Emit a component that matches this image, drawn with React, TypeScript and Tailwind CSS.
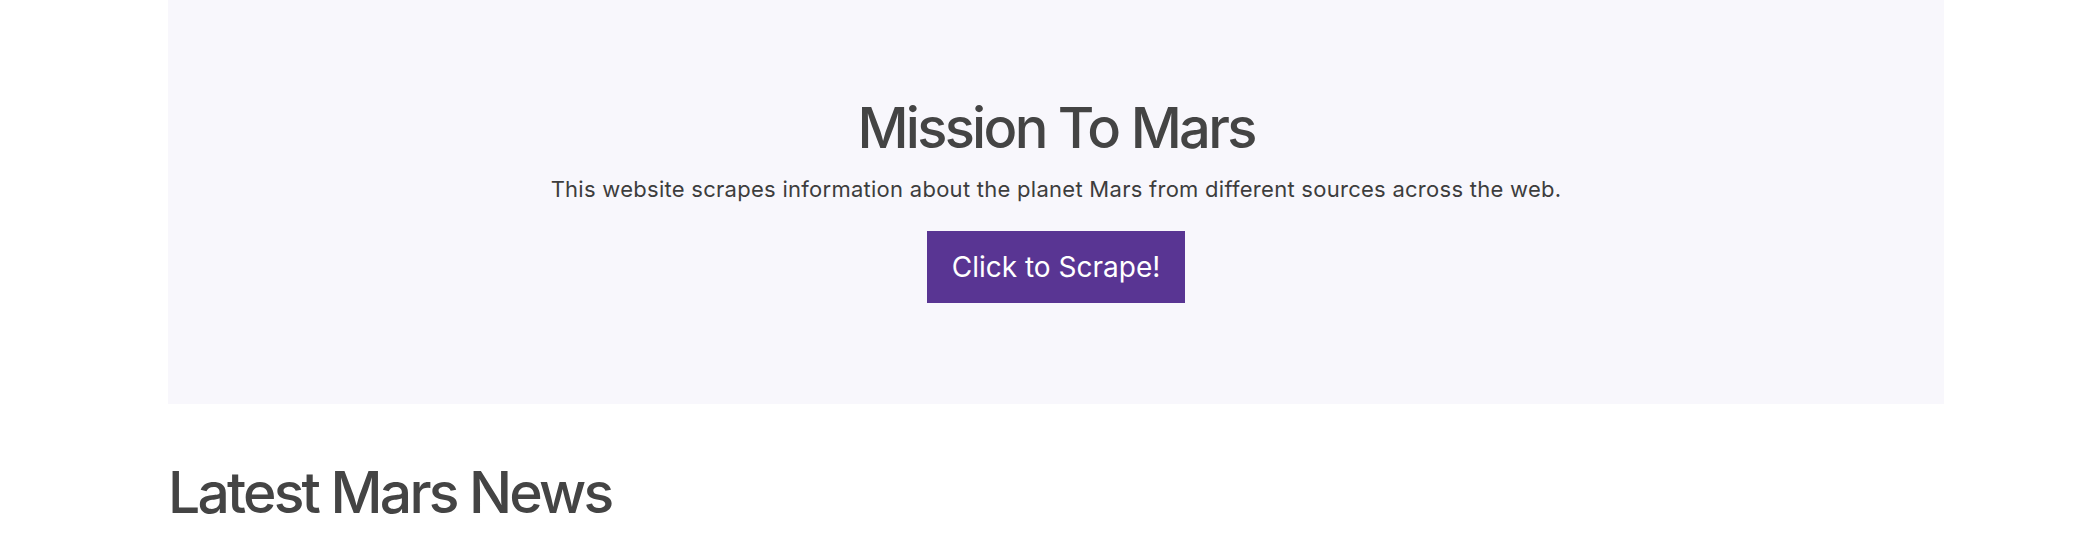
export default function App() {
  return (
    <div className="min-h-[560px] bg-white text-[#444444]" style={{ fontFamily: 'Inter, "Liberation Sans", sans-serif' }}>
      <div className="ml-[168px] w-[1776px]">
        <div className="flex h-[404px] flex-col items-center bg-[#f8f7fc] pt-[94px]">
          <h1 className="text-[56px] leading-[68px] font-medium tracking-[-2.7px]">Mission To Mars</h1>
          <p className="mt-[12px] text-[22px] leading-[30px] tracking-[0.27px] text-[#3d3d3d]">
            This website scrapes information about the planet Mars from different sources across the web.
          </p>
          <button className="mt-[27px] flex h-[72px] w-[258px] items-center justify-center bg-[#593593] text-[28px] text-white">
            Click to Scrape!
          </button>
        </div>
        <h2 className="mt-[55px] text-[57px] leading-[68px] font-medium tracking-[-2.8px]">Latest Mars News</h2>
      </div>
    </div>
  )
}
